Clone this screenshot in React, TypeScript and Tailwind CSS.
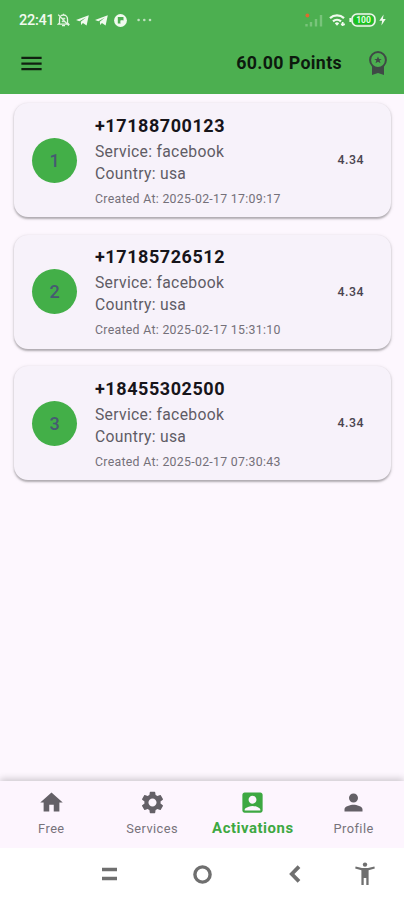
import type { ReactNode } from 'react';
import { MdAccountBox, MdHome, MdMenu, MdPerson, MdSettings } from 'react-icons/md';

interface Activation {
  phone: string;
  service: string;
  country: string;
  createdAt: string;
  price: string;
}

const activations: Activation[] = [
  { phone: '+17188700123', service: 'facebook', country: 'usa', createdAt: '2025-02-17 17:09:17', price: '4.34' },
  { phone: '+17185726512', service: 'facebook', country: 'usa', createdAt: '2025-02-17 15:31:10', price: '4.34' },
  { phone: '+18455302500', service: 'facebook', country: 'usa', createdAt: '2025-02-17 07:30:43', price: '4.34' },
];

const TelegramIcon = () => (
  <svg width="13" height="11" viewBox="0 0 13 11" fill="#f1faef">
    <path d="M12.8.2 10.6 10.6 6.9 8.1 5.2 9.9 4.8 6.8 10 2.4 3.4 6.2 0 5.1z" />
  </svg>
);

function StatusBar() {
  return (
    <div className="flex h-[32px] items-end justify-between pl-[19px] pr-[18px]">
      <div className="flex h-6 items-center">
        <span className="w-[35px] pt-[2px] text-[14.5px] leading-6 font-medium tracking-[-0.3px] text-[#f1faef]">22:41</span>
        <svg className="ml-[3px]" width="13" height="14" viewBox="0 0 13 14" fill="none" stroke="#e6f5e4" strokeWidth="1.3">
          <path d="M2.5 10V6a4 4 0 0 1 8 0v4l1.2 1.2H1.3zM5 12.6h3M6.5 2V.7M1.2 1.6l10.6 11" />
          <path d="M5 5.3h3L5 8.7h3" strokeWidth="1" />
        </svg>
        <span className="ml-[6px]"><TelegramIcon /></span>
        <span className="ml-[6px]"><TelegramIcon /></span>
        <svg className="ml-[6px]" width="13" height="13" viewBox="0 0 13 13">
          <circle cx="6.5" cy="6.5" r="6.4" fill="#f1faef" />
          <path d="M3.8 3h5.7v3.6H6.6v3H3.8z" fill="#4caf50" />
          <path d="M6.6 6.6h2.9l-2.9 3z" fill="#f1faef" />
        </svg>
        <svg className="ml-[10px]" width="15" height="4" viewBox="0 0 15 4" fill="#bfe2bf">
          <circle cx="1.6" cy="2" r="1.3" />
          <circle cx="7.3" cy="2" r="1.3" />
          <circle cx="13" cy="2" r="1.3" />
        </svg>
      </div>
      <div className="flex h-6 items-center">
        <svg width="20" height="14" viewBox="0 0 20 14">
          <path d="M2.5 11v2.5M7 9v4.5M12 6v7.5M17 2v11.5" stroke="#79c47b" strokeWidth="2.4" />
          <circle cx="3.4" cy="2.5" r="1.9" fill="#dc6b2f" />
        </svg>
        <svg className="ml-[5px]" width="18" height="14" viewBox="0 0 18 14" fill="none" stroke="#f1faef" strokeWidth="2.2">
          <path d="M1 5.1a10.3 10.3 0 0 1 14 0M4 8.4a6 6 0 0 1 8 0" />
          <path d="M5.8 10.2a3.4 3.4 0 0 1 4.4 0L8 12.8z" fill="#f1faef" stroke="none" />
          <path d="M13.7 9v4M11.9 11.4h4" strokeWidth="1.7" />
        </svg>
        <svg className="ml-[2px]" width="28" height="14" viewBox="0 0 28 14">
          <path d="M1.4 5v4" stroke="#f1faef" strokeWidth="2" />
          <rect x="3" y="1" width="23" height="12" rx="5" fill="#4caf50" stroke="#f1faef" strokeWidth="1.6" />
          <rect x="5" y="3" width="19" height="8" rx="3" fill="#16c51c" />
          <text x="14.5" y="10" textAnchor="middle" fill="#e9fbe8" fontSize="8.5" fontWeight="700" fontFamily="Roboto">100</text>
        </svg>
        <svg className="ml-[2px]" width="7" height="12" viewBox="0 0 7 12" fill="#f1faef">
          <path d="M4.6.5.3 6.8h2.8l-.7 4.7 4.3-6.4H3.9z" />
        </svg>
      </div>
    </div>
  );
}

function AppBar() {
  return (
    <div className="flex h-[62px] items-center pl-[18px]">
      <MdMenu size={27} color="#102010" />
      <span className="ml-auto mr-[26px] text-[17.8px] font-bold tracking-[0.35px] text-[#0d1a0e]">60.00 Points</span>
      <svg className="mr-[16px]" width="20" height="26" viewBox="0 0 20 26">
        <path d="M4 15.5V25l6-2 6 2v-9.5z" fill="#3f4a46" />
        <circle cx="10" cy="10" r="7.9" fill="#4caf50" stroke="#3f4a46" strokeWidth="2" />
        <path d="m10 6.4 1.1 2.5h2.7l-2.2 1.7.9 2.7-2.5-1.6-2.5 1.6.9-2.7-2.2-1.7h2.7z" fill="#3f4a46" />
      </svg>
    </div>
  );
}

function ActivationCard({ activation, index }: { activation: Activation; index: number }) {
  return (
    <div className="flex h-[114px] items-center rounded-[14px] bg-[#f7f2fa] pl-[18px] pr-[27px] shadow-[0_1.5px_2px_rgba(0,0,0,0.26),0_1px_4px_rgba(0,0,0,0.1)]">
      <div className="flex size-[45px] items-center justify-center rounded-full bg-[#43af48] text-[18px] font-medium text-[#465a72]">
        {index + 1}
      </div>
      <div className="ml-[18px] flex-1 pt-[2px] text-[#605c65]">
        <div className="h-[26px] text-[18px] leading-[24px] font-bold tracking-[0.56px] text-[#17151a]">{activation.phone}</div>
        <div className="h-[23px] text-[15.7px] leading-[23px] tracking-[0.31px]">Service: {activation.service}</div>
        <div className="h-[22px] text-[15.7px] leading-[22px] tracking-[0.31px]">Country: {activation.country}</div>
        <div className="mt-[5px] h-[19px] text-[12.3px] leading-[19px] tracking-[0.3px] text-[#747079]">Created At: {activation.createdAt}</div>
      </div>
      <span className="pt-px text-[12.3px] font-medium tracking-[0.5px] text-[#49454f]">{activation.price}</span>
    </div>
  );
}

function NavItem({ icon, label, active = false }: { icon: ReactNode; label: string; active?: boolean }) {
  return (
    <div className={`flex flex-1 flex-col items-center pt-2 ${active ? 'text-[#3da842]' : 'text-[#646067]'}`}>
      {icon}
      {active ? (
        <span className="mt-[2px] text-[14.9px] leading-5 font-bold tracking-[0.55px]">{label}</span>
      ) : (
        <span className="mt-[3px] text-[12.8px] leading-5 tracking-[0.45px] text-[#77737b]">{label}</span>
      )}
    </div>
  );
}

export default function App() {
  return (
    <div className="flex h-[900px] w-[404px] flex-col overflow-hidden bg-[#fdf7fe] font-[Roboto,sans-serif]">
      <header className="h-[94px] shrink-0 bg-[#4caf50]">
        <StatusBar />
        <AppBar />
      </header>

      <main className="flex flex-1 flex-col gap-[17.5px] pt-[9px] pr-[13px] pl-[14px]">
        {activations.map((activation, index) => (
          <ActivationCard key={activation.phone} activation={activation} index={index} />
        ))}
      </main>

      <nav className="flex h-[67px] shrink-0 bg-[#fdf5fe] pl-px shadow-[0_-2px_7px_rgba(0,0,0,0.2)]">
        <NavItem icon={<MdHome size={27} />} label="Free" />
        <NavItem icon={<MdSettings size={27} />} label="Services" />
        <NavItem icon={<MdAccountBox size={27} />} label="Activations" active />
        <NavItem icon={<MdPerson size={27} />} label="Profile" />
      </nav>

      {/* System navigation */}
      <div className="z-10 flex h-[52px] shrink-0 items-center bg-white pl-[102px] text-[#6f6f6f]">
        <svg width="15" height="14" viewBox="0 0 15 14" stroke="currentColor" strokeWidth="3.6">
          <path d="M0 2.5h15M0 11.5h15" />
        </svg>
        <svg className="ml-[76px]" width="19" height="19" viewBox="0 0 19 19" fill="none" stroke="currentColor" strokeWidth="3.4">
          <circle cx="9.5" cy="9.5" r="7.6" />
        </svg>
        <svg className="ml-[77px]" width="12" height="18" viewBox="0 0 12 18" fill="none" stroke="currentColor" strokeWidth="3.8">
          <path d="M10 1.7 2.8 9l7.2 7.3" />
        </svg>
        <svg className="ml-[54px]" width="20" height="24" viewBox="0 0 20 24" fill="currentColor">
          <circle cx="10" cy="2.6" r="2.2" />
          <path d="M.6 4.6 7 6h6l6.4-1.4.4 2-6.2 1.6V23h-2.3v-7H8.7v7H6.4V8.2L.2 6.6z" />
        </svg>
      </div>
    </div>
  );
}
